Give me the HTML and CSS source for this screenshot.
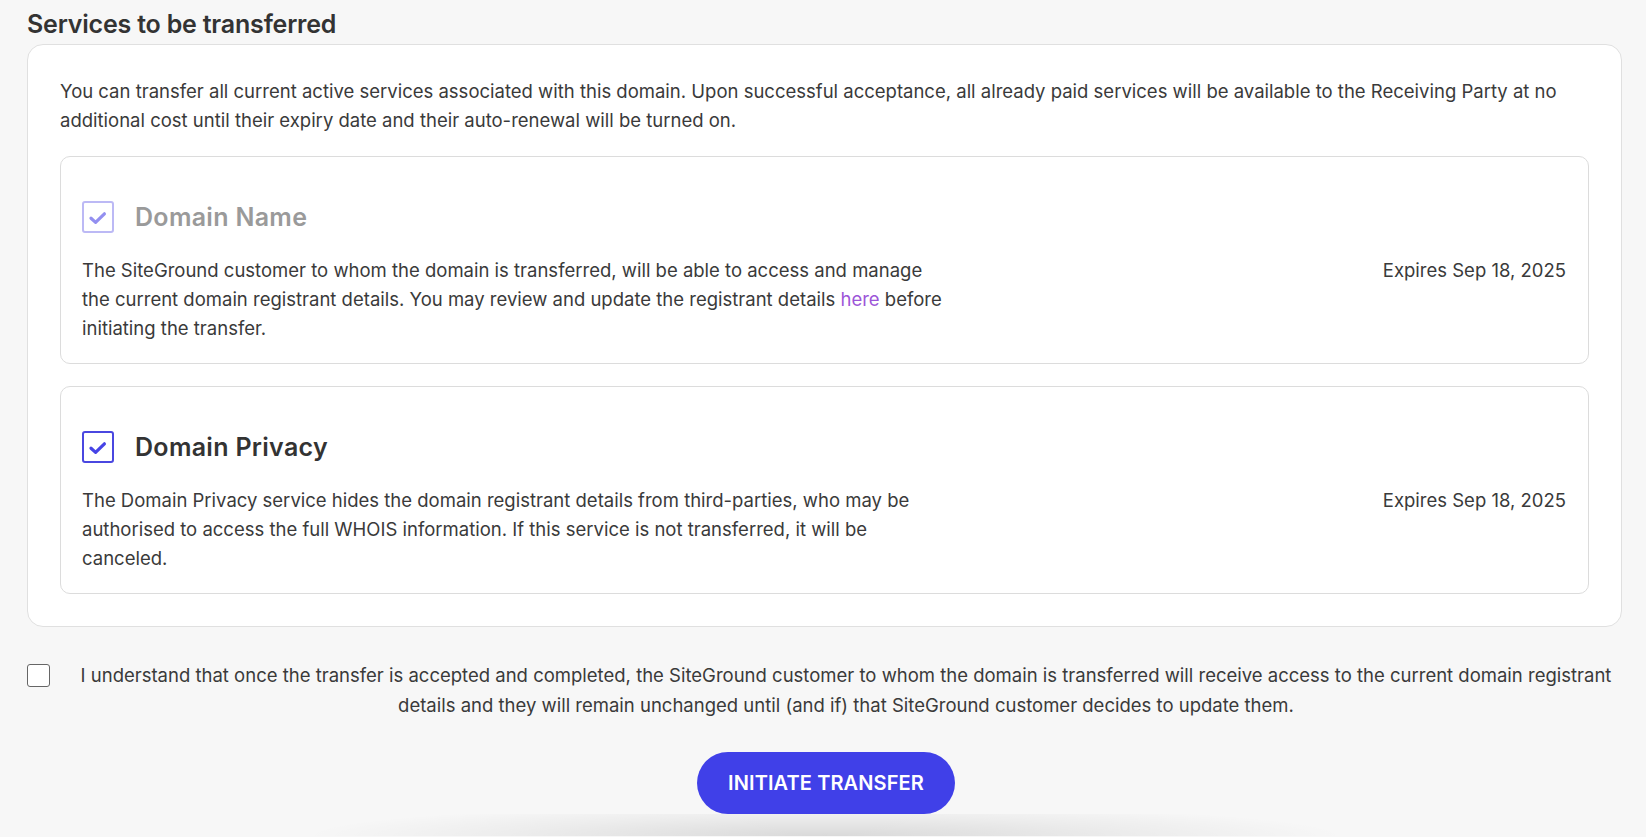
FILE: index.html
```html
<!DOCTYPE html>
<html lang="en">
<head>
<meta charset="utf-8">
<title>Services to be transferred</title>
<link rel="stylesheet" href="styles.css">
</head>
<body>
<main class="page">
  <h2 class="section-title">Services to be transferred</h2>
  <section class="panel">
    <p class="intro">You can transfer all current active services associated with this domain. Upon successful acceptance, all already paid services will be available to the Receiving Party at no additional cost until their expiry date and their auto-renewal will be turned on.</p>

    <div class="service service--disabled">
      <div class="service-head">
        <span class="check check--muted">
          <svg viewBox="0 0 28 28" width="28" height="28"><path d="M7 15.2 L11.6 19.4 L20.4 10.8" fill="none" stroke="currentColor" stroke-width="3.2" stroke-linecap="round" stroke-linejoin="round"/></svg>
        </span>
        <span class="service-name">Domain Name</span>
      </div>
      <div class="service-body">
        <p class="service-desc">The SiteGround customer to whom the domain is transferred, will be able to access and manage the current domain registrant details. You may review and update the registrant details <a class="link" href="#">here</a> before initiating the transfer.</p>
        <span class="expires">Expires Sep 18, 2025</span>
      </div>
    </div>

    <div class="service">
      <div class="service-head">
        <span class="check check--on">
          <svg viewBox="0 0 28 28" width="28" height="28"><path d="M7 15.2 L11.6 19.4 L20.4 10.8" fill="none" stroke="currentColor" stroke-width="3.2" stroke-linecap="round" stroke-linejoin="round"/></svg>
        </span>
        <span class="service-name">Domain Privacy</span>
      </div>
      <div class="service-body">
        <p class="service-desc">The Domain Privacy service hides the domain registrant details from third-parties, who may be authorised to access the full WHOIS information. If this service is not transferred, it will be<br>canceled.</p>
        <span class="expires">Expires Sep 18, 2025</span>
      </div>
    </div>
  </section>

  <label class="agree">
    <span class="agree-box"></span>
    <span class="agree-text">I understand that once the transfer is accepted and completed, the SiteGround customer to whom the domain is transferred will receive access to the current domain registrant details and they will remain unchanged until (and if) that SiteGround customer decides to update them.</span>
  </label>

  <div class="actions">
    <button class="btn-primary" type="button">Initiate transfer</button>
  </div>

  <div class="footer-shade"></div>
</main>
</body>
</html>
```

FILE: styles.css
```css
* { box-sizing: border-box; }

html, body {
  margin: 0;
  padding: 0;
  background: #f7f7f7;
  overflow: hidden;
}

body {
  font-family: "Inter", "Liberation Sans", sans-serif;
  color: #3a3a3a;
}

.page {
  padding: 9px 24px 0 27px;
  display: flex;
  flex-direction: column;
}

.section-title {
  margin: 0 0 5px;
  font-family: "Inter", "Liberation Sans", sans-serif;
  font-weight: 600;
  font-size: 25px;
  line-height: 30px;
  color: #333333;
  letter-spacing: -0.2px;
}

.panel {
  background: #ffffff;
  border: 1px solid #e0e0e0;
  border-radius: 16px;
  padding: 32px;
  display: flex;
  flex-direction: column;
  gap: 22px;
}

.intro {
  margin: 0 0 -1px;
  font-size: 18.5px;
  line-height: 29px;
}

.service {
  border: 1px solid #dcdcdc;
  border-radius: 10px;
  padding: 44px 22px 20px 21px;
  display: flex;
  flex-direction: column;
  gap: 23px;
}

.service-head {
  display: flex;
  align-items: center;
  gap: 21px;
}

.check {
  width: 32px;
  height: 32px;
  border-radius: 3px;
  display: flex;
  align-items: center;
  justify-content: center;
  flex: none;
}

.check--on {
  border: 2px solid #4a47e0;
  color: #4643e6;
}

.check--muted {
  border: 2px solid #bcb9f5;
  color: #938ff0;
}

.service-name {
  font-family: "Inter", "Liberation Sans", sans-serif;
  font-weight: 600;
  font-size: 25px;
  line-height: 30px;
  letter-spacing: 0.3px;
  color: #333333;
}

.service--disabled .service-name {
  color: #9a9a9a;
}

.service-body {
  display: flex;
  justify-content: space-between;
  align-items: flex-start;
}

.service-desc {
  margin: 0;
  flex: 0 0 872px;
  font-size: 18.5px;
  line-height: 29px;
}

.expires {
  font-size: 18.5px;
  line-height: 29px;
  white-space: nowrap;
}

.link {
  color: #9c55d8;
  text-decoration: none;
}

.agree {
  margin-top: 33px;
  display: flex;
  align-items: flex-start;
  gap: 24px;
  padding-right: 4px;
}

.agree-box {
  flex: none;
  width: 23px;
  height: 23px;
  margin-top: 4px;
  border: 1.5px solid #666666;
  border-radius: 3px;
  background: #ffffff;
}

.agree-text {
  flex: 1;
  text-align: center;
  font-size: 18.5px;
  line-height: 30px;
  color: #3a3a3a;
}

.actions {
  margin-top: 32px;
  display: flex;
  justify-content: center;
  padding-left: 3px;
}

.btn-primary {
  width: 258px;
  height: 62px;
  border: none;
  border-radius: 31px;
  background: #4040e8;
  color: #ffffff;
  font-family: "Inter", "Liberation Sans", sans-serif;
  font-weight: 600;
  font-size: 20px;
  text-transform: uppercase;
  letter-spacing: 0.1px;
  cursor: pointer;
}

.footer-shade {
  height: 22px;
  margin: 0 auto;
  width: 1100px;
  background: radial-gradient(ellipse 520px 32px at 50% 100%, rgba(0, 0, 0, 0.12), rgba(0, 0, 0, 0.045) 60%, rgba(0, 0, 0, 0) 100%);
}
```
